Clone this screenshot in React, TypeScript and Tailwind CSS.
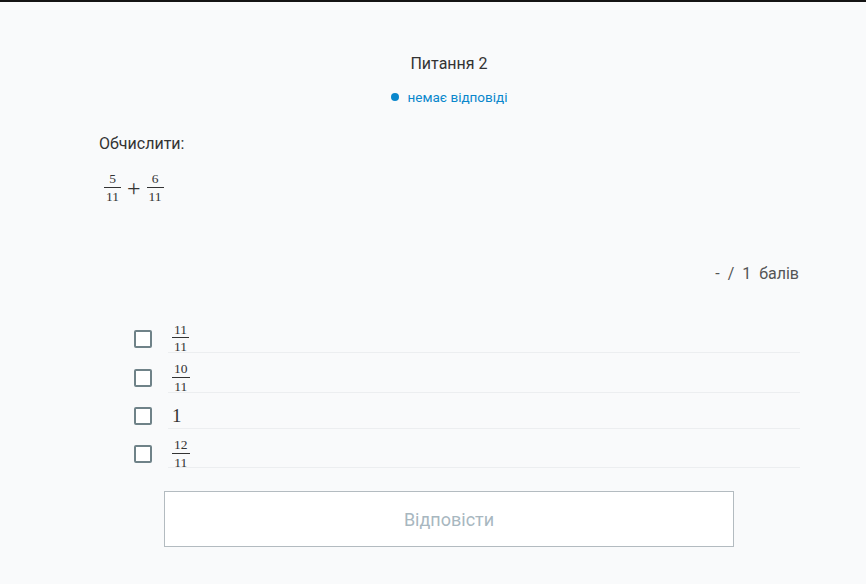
import React from "react";

const serif = '"Liberation Serif", "DejaVu Serif", serif';

function Frac({ n, d }: { n: string; d: string }) {
  return (
    <span className="inline-flex flex-col items-center align-middle leading-none text-[13.5px] text-[#333]" style={{ fontFamily: serif }}>
      <span className="px-[2px] pb-[1px]">{n}</span>
      <span className="h-px w-full bg-[#333]" />
      <span className="px-[2px] pt-[2px]">{d}</span>
    </span>
  );
}

function Option({ children, h, pt }: { children: React.ReactNode; h: string; pt: string }) {
  return (
    <div className={`flex ${h}`}>
      <div className={`w-[34px] flex items-center justify-start ${pt}`}>
        <span className="block w-[18px] h-[18px] border-2 border-[#6f8288] rounded-[2px] bg-white" />
      </div>
      <div className={`flex-1 flex items-center border-b border-[#eceef0] pl-[4px] text-[#333] ${pt}`}>
        {children}
      </div>
    </div>
  );
}

export default function App() {
  return (
    <div className="min-h-[584px] bg-[#f9fafb] text-[#333]" style={{ fontFamily: 'Roboto, "Open Sans", sans-serif' }}>
      <div className="h-[2px] bg-[#141414]" />
      <div className="pl-[99px] pr-[67px]">
        <div className="pt-[51px] text-center text-[16px] leading-[22px] text-[#333]">Питання 2</div>
        <div className="mt-[13px] flex items-center justify-center text-[13.5px] leading-[18px] text-[#0a87cc]">
          <span className="w-[8px] h-[8px] rounded-full bg-[#0a87cc] mr-[9px]" />
          <span>немає відповіді</span>
        </div>
        <div className="mt-[27px] text-[16px] leading-[22px]">Обчислити:</div>
        <div className="mt-[17px] ml-[5px] flex items-center text-[#333]">
          <Frac n="5" d="11" />
          <span className="mx-[6px] text-[24px] leading-none" style={{ fontFamily: serif }}>+</span>
          <Frac n="6" d="11" />
        </div>
        <div className="mt-[60px] flex justify-end text-[16px] leading-[22px] text-[#555]">
          <span>-&nbsp; /&nbsp; 1&nbsp; балів</span>
        </div>
        <div className="mt-[28px] ml-[35px] mr-[-1px]">
          <Option h="h-[40px]" pt="pt-[11px]"><Frac n="11" d="11" /></Option>
          <Option h="h-[40px]" pt="pt-[10px]"><Frac n="10" d="11" /></Option>
          <Option h="h-[36px]" pt="pt-[10px]"><span className="text-[19px] leading-none text-[#333]" style={{ fontFamily: serif }}>1</span></Option>
          <Option h="h-[39px]" pt="pt-[11px]"><Frac n="12" d="11" /></Option>
        </div>
        <div className="mt-[23px] flex justify-center">
          <button className="w-[570px] h-[56px] bg-white border border-[#b3bbc0] text-[18px] text-[#a8b7bf]">Відповісти</button>
        </div>
      </div>
    </div>
  );
}
